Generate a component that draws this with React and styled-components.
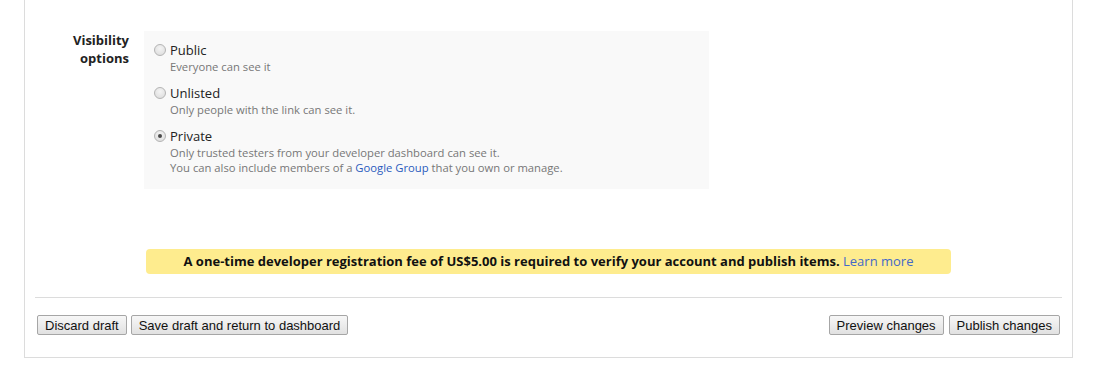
import React, { useState } from 'react'
import styled, { createGlobalStyle } from 'styled-components'

const GlobalStyle = createGlobalStyle`
  body {
    margin: 0;
    background: #fff;
    font-family: "Open Sans", "DejaVu Sans", sans-serif;
    color: #222;
  }
`

const Panel = styled.div`
  margin: 0 24px;
  border: 1px solid #dcdcdc;
  border-top: none;
  padding: 31px 10px 22px;
`

const FormRow = styled.div`
  display: grid;
  grid-template-columns: 95px 565px;
  column-gap: 14px;
`

const Label = styled.div`
  font-size: 13px;
  line-height: 18px;
  font-weight: 700;
  text-align: right;
  padding-right: 1px;
`

const OptionBox = styled.div`
  background: #f9f9f9;
  padding: 10px 10px 14px;
  display: flex;
  flex-direction: column;
  gap: 10px;
`

const Option = styled.label`
  display: grid;
  grid-template-columns: 16px 1fr;
  cursor: pointer;
`

const Radio = styled.input.attrs({ type: 'radio' })`
  appearance: none;
  margin: 3px 0 0;
  width: 12px;
  height: 12px;
  border-radius: 50%;
  border: 1px solid #b4b4b4;
  background: radial-gradient(circle at 50% 35%, #f4f4f4 0%, #dadada 100%);
  box-sizing: border-box;
  position: relative;
  cursor: pointer;

  &:checked::after {
    content: '';
    position: absolute;
    left: 3px;
    top: 3px;
    width: 4px;
    height: 4px;
    border-radius: 50%;
    background: #4a4a4a;
  }
`

const Title = styled.div`
  font-size: 13px;
  line-height: 18px;
  color: #222;
`

const Desc = styled.div`
  grid-column: 2;
  font-size: 11.25px;
  line-height: 15px;
  color: #777;
`

const Link = styled.a`
  color: ${p => p.$strong ? '#2a5bbd' : '#4469c8'};
  text-decoration: none;
  font-weight: 400;
`

const Notice = styled.div`
  grid-column: 2;
  width: 805px;
  margin: 60px 0 0 2px;
  height: 25px;
  background: #feec8e;
  border-radius: 4px;
  font-size: 13px;
  font-weight: 700;
  line-height: 25px;
  text-align: center;
  color: #111;
`

const Divider = styled.hr`
  margin: 23px 0 0;
  border: none;
  border-top: 1px solid #dcdcdc;
`

const ButtonBar = styled.div`
  display: flex;
  justify-content: space-between;
  padding: 0 2px;
  margin-top: 17px;
`

const ButtonGroup = styled.div`
  display: flex;
  gap: ${p => p.$gap || 4}px;
`

const Button = styled.button`
  font-family: "Liberation Sans", Arial, sans-serif;
  font-size: 13px;
  height: 20px;
  padding: 0 7px;
  color: #111;
  border: 1px solid #a6a6a6;
  border-radius: 2px;
  background: linear-gradient(#f7f7f7, #e1e1e1);
  cursor: pointer;
`

const options = [
  { id: 'public', title: 'Public', desc: ['Everyone can see it'] },
  { id: 'unlisted', title: 'Unlisted', desc: ['Only people with the link can see it.'] },
  {
    id: 'private',
    title: 'Private',
    desc: [
      'Only trusted testers from your developer dashboard can see it.',
      <>You can also include members of a <Link $strong href="#">Google Group</Link> that you own or manage.</>,
    ],
  },
]

const App = () => {
  const [visibility, setVisibility] = useState('private')

  return (
    <>
      <GlobalStyle />
      <Panel>
        <FormRow>
          <Label>Visibility<br />options</Label>
          <OptionBox>
            {options.map(opt => (
              <Option key={opt.id}>
                <Radio
                  name="visibility"
                  checked={visibility === opt.id}
                  onChange={() => setVisibility(opt.id)}
                />
                <Title>{opt.title}</Title>
                {opt.desc.map((line, i) => <Desc key={i}>{line}</Desc>)}
              </Option>
            ))}
          </OptionBox>
          <Notice>
            A one-time developer registration fee of US$5.00 is required to verify your account and publish items. <Link href="#">Learn more</Link>
          </Notice>
        </FormRow>
        <Divider />
        <ButtonBar>
          <ButtonGroup>
            <Button>Discard draft</Button>
            <Button>Save draft and return to dashboard</Button>
          </ButtonGroup>
          <ButtonGroup $gap={5}>
            <Button>Preview changes</Button>
            <Button>Publish changes</Button>
          </ButtonGroup>
        </ButtonBar>
      </Panel>
    </>
  )
}

export default App
